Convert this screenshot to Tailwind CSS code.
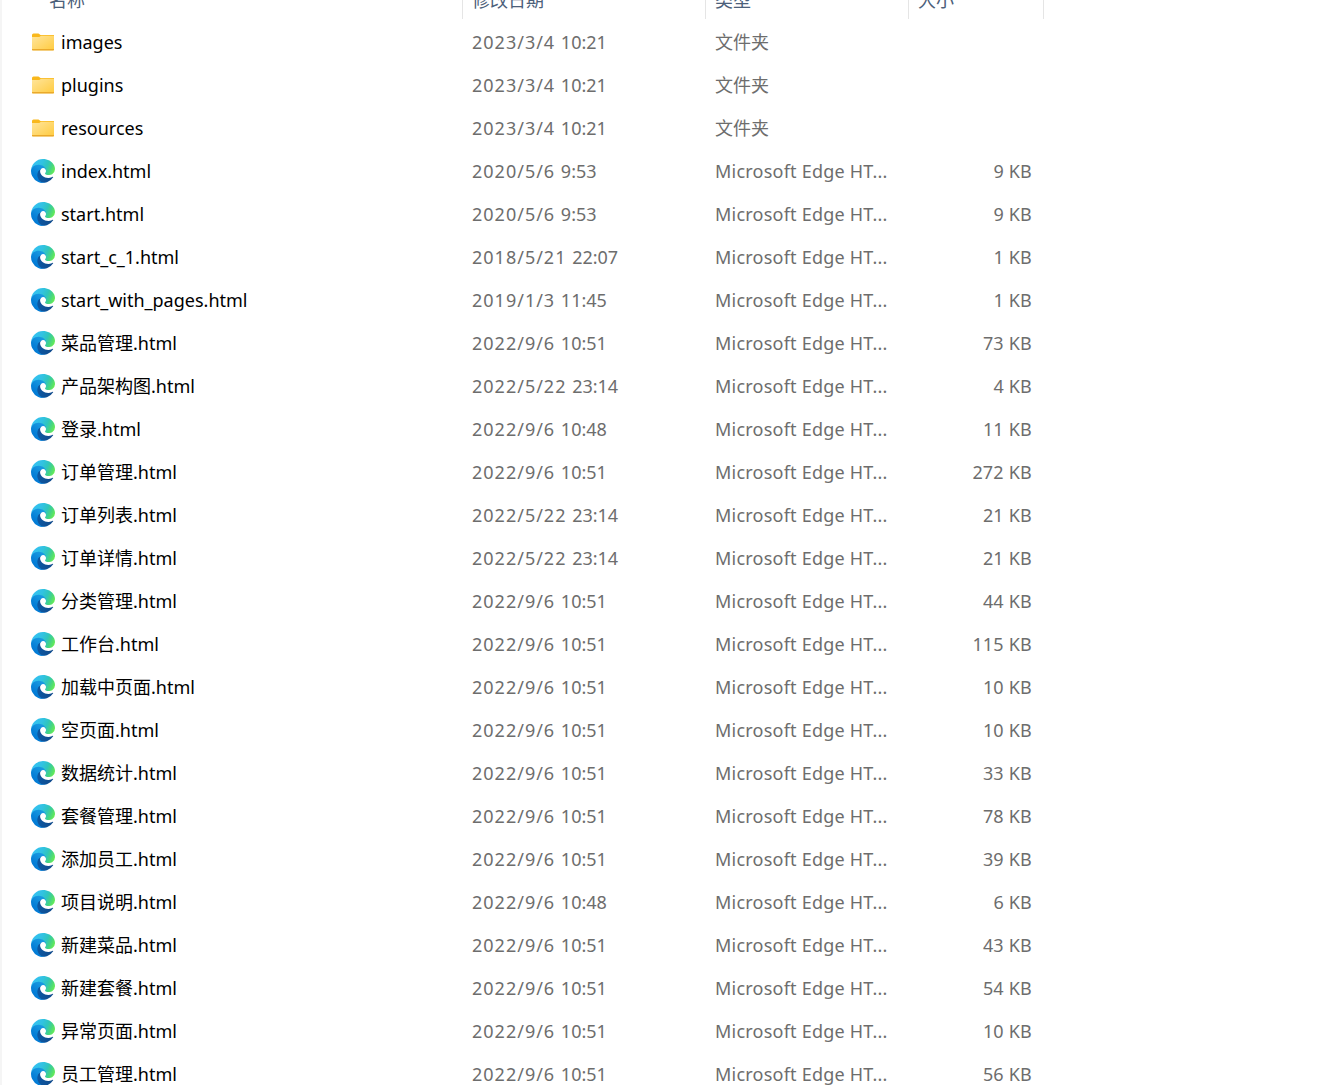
<!DOCTYPE html>
<html lang="zh-CN">
<head>
<meta charset="utf-8">
<title>文件</title>
<script src="https://cdn.jsdelivr.net/npm/@tailwindcss/browser@4"></script>
</head>
<body class="bg-white">
<div class="flex h-[1085px] w-[1324px] overflow-hidden border-l-2 border-[#f5f5f5] font-['Noto_Sans','Noto_Sans_CJK_SC',sans-serif] text-[18px]">
  <main class="w-full">
    <header class="flex h-[19px] items-end text-[#4c607a]">
      <div class="h-[19px] w-[461px] border-r border-[#e5e5e5] pl-[47px]"><span class="-mt-[14px] block leading-[28px]">名称</span></div>
      <div class="h-[19px] w-[243px] border-r border-[#e5e5e5] pl-[9px]"><span class="-mt-[14px] block leading-[28px]">修改日期</span></div>
      <div class="h-[19px] w-[203px] border-r border-[#e5e5e5] pl-[9px]"><span class="-mt-[14px] block leading-[28px]">类型</span></div>
      <div class="h-[19px] w-[135px] border-r border-[#e5e5e5] pl-[9px]"><span class="-mt-[14px] block leading-[28px]">大小</span></div>
    </header>
    <div id="rows" class="pt-[2px]"></div>
  </main>
</div>
<svg class="absolute size-0">
  <defs>
    <linearGradient id="fold" x1="0" y1="0" x2="1" y2="1"><stop offset="0" stop-color="#ffe59c"/><stop offset="1" stop-color="#ffcb3f"/></linearGradient>
    <linearGradient id="navy" x1="0" y1="0" x2="1" y2="0"><stop offset="0" stop-color="#0c59a4"/><stop offset="1" stop-color="#114a8b"/></linearGradient>
    <linearGradient id="blue" x1=".9" y1="0" x2=".3" y2="1"><stop offset="0" stop-color="#1b9de2"/><stop offset=".3" stop-color="#1595df"/><stop offset=".67" stop-color="#0680d7"/><stop offset="1" stop-color="#0078d4"/></linearGradient>
    <linearGradient id="sea" gradientUnits="userSpaceOnUse" x1="30" y1="40" x2="245" y2="135"><stop offset="0" stop-color="#35c1f1"/><stop offset=".35" stop-color="#31c2e2"/><stop offset=".6" stop-color="#2fc5bd"/><stop offset=".8" stop-color="#44d483"/><stop offset="1" stop-color="#66eb56"/></linearGradient>
  </defs>
</svg>
<template id="folder"><svg class="h-[18px] w-[24px]" viewBox="0 0 24 18"><path d="M1 2Q1 .5 2.5 .5H7.5L9.5 2H23V8H1Z" fill="#f9b81c"/><path d="M1 4H8.3L10 2.8H23V16.6Q23 17.3 22.3 17.3H1.7Q1 17.3 1 16.6Z" fill="url(#fold)"/><path d="M1 16.1H23V16.6Q23 17.5 22.3 17.5H1.7Q1 17.5 1 16.6Z" fill="#eaa92b"/></svg></template>
<template id="edge"><svg class="size-[24px]" viewBox="0 0 256 256"><path fill="url(#navy)" d="M231.05 190.54c-3.38 1.77-6.86 3.33-10.43 4.69a101.3 101.3 0 0 1-35.72 6.46c-47.07 0-88.08-32.38-88.08-73.94a31.4 31.4 0 0 1 16.33-27.26c-42.58 1.79-53.53 46.17-53.53 72.17 0 73.52 67.76 80.98 82.36 80.98 7.87 0 19.75-2.3 26.87-4.54l1.31-.44a127.94 127.94 0 0 0 66.7-52.9 4 4 0 0 0-5.81-5.22z"/><path fill="url(#blue)" d="M105.73 241.42a79.2 79.2 0 0 1-22.74-21.34 80.72 80.72 0 0 1 29.53-120.05c3.12-1.47 8.45-4.14 15.54-3.99a32.35 32.35 0 0 1 25.69 13 31.9 31.9 0 0 1 6.36 18.7c0-.22 24.46-79.62-80-79.62-43.9 0-80.01 41.66-80.01 78.2a130.2 130.2 0 0 0 12.11 56.02 128 128 0 0 0 156.38 67.07 75.55 75.55 0 0 1-62.78-7.96z"/><path fill="url(#sea)" d="M152.33 148.89c-.81 1.05-3.3 2.5-3.3 5.66 0 2.61 1.7 5.12 4.72 7.23 14.38 10 41.49 8.68 41.56 8.68a59.57 59.57 0 0 0 30.27-8.35 61.4 61.4 0 0 0 30.43-52.88c.26-22.42-8-37.3-11.34-43.91C223.46 23.84 177.72 0 128 0A128 128 0 0 0 0 126.2c.48-36.54 36.8-66.05 80-66.05 3.5 0 23.46.34 42 10.07 16.34 8.58 24.9 18.94 30.85 29.21 6.18 10.67 7.28 24.15 7.28 29.52 0 5.37-2.74 13.33-7.8 19.94z"/></svg></template>
<script>
const files = [
['images','2023/3/4 10:21',''],['plugins','2023/3/4 10:21',''],['resources','2023/3/4 10:21',''],
['index.html','2020/5/6 9:53','9'],['start.html','2020/5/6 9:53','9'],['start_c_1.html','2018/5/21 22:07','1'],['start_with_pages.html','2019/1/3 11:45','1'],
['菜品管理.html','2022/9/6 10:51','73'],['产品架构图.html','2022/5/22 23:14','4'],['登录.html','2022/9/6 10:48','11'],['订单管理.html','2022/9/6 10:51','272'],
['订单列表.html','2022/5/22 23:14','21'],['订单详情.html','2022/5/22 23:14','21'],['分类管理.html','2022/9/6 10:51','44'],['工作台.html','2022/9/6 10:51','115'],
['加载中页面.html','2022/9/6 10:51','10'],['空页面.html','2022/9/6 10:51','10'],['数据统计.html','2022/9/6 10:51','33'],['套餐管理.html','2022/9/6 10:51','78'],
['添加员工.html','2022/9/6 10:51','39'],['项目说明.html','2022/9/6 10:48','6'],['新建菜品.html','2022/9/6 10:51','43'],['新建套餐.html','2022/9/6 10:51','54'],
['异常页面.html','2022/9/6 10:51','10'],['员工管理.html','2022/9/6 10:51','56']];
const icon = id => document.getElementById(id).innerHTML;
document.getElementById('rows').innerHTML = files.map(([name, date, size]) => {
  const [day, time] = date.split(' ');
  return `<div class="flex h-[43px] items-center whitespace-nowrap text-[#6d6d6d]">
<span class="flex w-[470px] items-center pl-[29px]"><span class="flex w-[30px] pb-[2px]">${icon(size ? 'edge' : 'folder')}</span><span class="text-black">${name}</span></span>
<span class="w-[243px]"><span class="tracking-[1px]">${day} </span>${time}</span>
<span class="w-[200px] ${size ? 'tracking-[0.22px]' : ''}">${size ? 'Microsoft Edge HT...' : '文件夹'}</span>
<span class="w-[117px] text-right tracking-[0.2px]">${size ? size + ' KB' : ''}</span></div>`;
}).join('');
</script>
</body>
</html>
